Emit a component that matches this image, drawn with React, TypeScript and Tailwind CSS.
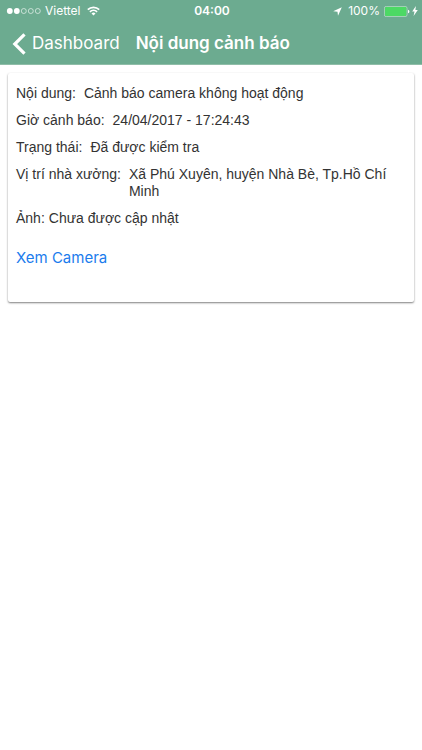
import type { ReactNode } from "react"

interface DetailRowProps {
  label: string
  tight?: boolean
  children: ReactNode
}

const signalDots = [true, true, false, false, false]

function StatusBar() {
  return (
    <div className="grid h-5 grid-cols-3 items-center pt-0.5 pr-1 pl-1.5 text-xs">
      <div className="flex items-center">
        <svg width="35" height="8" viewBox="0 0 35 8" role="img" aria-label="Signal">
          {signalDots.map((filled, i) => (
            <circle
              key={i}
              cx={3.8 + i * 7}
              cy="4"
              r={filled ? 2.9 : 2.5}
              fill={filled ? "#fff" : "none"}
              stroke="#fff"
              strokeWidth={filled ? 0 : 0.6}
            />
          ))}
        </svg>
        <span className="ml-1">Viettel</span>
        <svg className="ml-1.5" width="13" height="10" viewBox="0 0 13 10" fill="none" stroke="#fff" strokeWidth="1.7">
          <path d="M.8 3.6a8.2 8.2 0 0 1 11.4 0" />
          <path d="M2.9 5.9a5.2 5.2 0 0 1 7.2 0" />
          <path d="M6.5 9.6 4.5 7.5a2.9 2.9 0 0 1 4 0z" fill="#fff" stroke="none" />
        </svg>
      </div>

      <span className="text-center font-semibold">04:00</span>

      <div className="flex items-center justify-end">
        <svg width="9" height="9" viewBox="0 0 9 9" fill="#fff">
          <path d="M8.8.2 5 8.8 4.5 4.7.2 4.2z" />
        </svg>
        <span className="ml-1.5">100%</span>
        <svg className="ml-1" width="26" height="11" viewBox="0 0 26 11">
          <rect x=".4" y=".4" width="22.6" height="10.2" rx="1.8" fill="none" stroke="#c4e6d0" strokeWidth=".7" />
          <rect x="1.1" y="1.1" width="21.2" height="8.8" rx="1" fill="#4cd964" />
          <path d="M24 3.7c1.9.5 1.9 3.1 0 3.6z" fill="#fff" />
        </svg>
        <svg className="ml-0.5" width="6" height="10" viewBox="0 0 6 10" fill="#fff">
          <path d="M3.9 0 .2 5.6h2.3L1.6 10l4.2-5.9H3.4z" />
        </svg>
      </div>
    </div>
  )
}

function DetailRow({ label, tight, children }: DetailRowProps) {
  return (
    <div className={tight ? "flex gap-1" : "flex gap-2"}>
      <dt className="shrink-0">{label}</dt>
      <dd>{children}</dd>
    </div>
  )
}

export default function App() {
  return (
    <div className="min-h-screen bg-white font-['Inter','Liberation_Sans',sans-serif]">
      <header className="border-b border-[#8fbda8] bg-[#6cab90] text-white">
        <StatusBar />
        <nav className="flex h-11 items-center gap-4 px-3 pt-1">
          <a href="#dashboard" className="flex items-center gap-1.5 text-[17px]">
            <svg width="14" height="22" viewBox="0 0 14 22" fill="none" stroke="#fff" strokeWidth="3.2">
              <path d="M12.5 1.4 2.8 11l9.7 9.6" />
            </svg>
            Dashboard
          </a>
          <h1 className="text-[17px] font-semibold">Nội dung cảnh báo</h1>
        </nav>
      </header>

      <main className="p-2">
        <section className="rounded-xs bg-white px-2 pt-3 pb-8 shadow-[0_1px_2px_rgba(0,0,0,0.5)]">
          <dl className="space-y-2.5 font-['Liberation_Sans',Arial,sans-serif] text-sm leading-[17px] text-[#333]">
            <DetailRow label="Nội dung:">Cảnh báo camera không hoạt động</DetailRow>
            <DetailRow label="Giờ cảnh báo:">24/04/2017 - 17:24:43</DetailRow>
            <DetailRow label="Trạng thái:">Đã được kiểm tra</DetailRow>
            <DetailRow label="Vị trí nhà xưởng:">Xã Phú Xuyên, huyện Nhà Bè, Tp.Hồ Chí Minh</DetailRow>
            <DetailRow label="Ảnh:" tight>Chưa được cập nhật</DetailRow>
          </dl>
          <button type="button" className="mt-5 text-[15px] text-[#1b7ced]">
            Xem Camera
          </button>
        </section>
      </main>
    </div>
  )
}
